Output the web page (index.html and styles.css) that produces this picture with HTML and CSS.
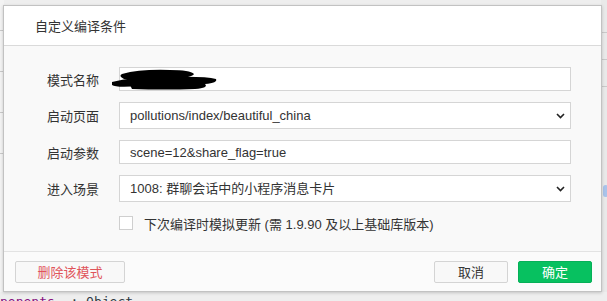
FILE: index.html
```html
<!DOCTYPE html>
<html lang="zh-CN">
<head>
<meta charset="utf-8">
<title>自定义编译条件</title>
<link rel="stylesheet" href="styles.css">
</head>
<body>
<div class="page">
  <div class="editor">
    <div class="gutter">
      <span class="g-line"></span><span class="g-line"></span><span class="g-line"></span><span class="g-line"></span>
    </div>
    <div class="side">
      <span class="s-line"></span><span class="s-line"></span><span class="s-line"></span><span class="s-dot"></span>
    </div>
  </div>
  <div class="console-line"><span class="key">ponents</span>  : Object</div>
</div>

<div class="dialog">
  <div class="dialog-head">自定义编译条件</div>
  <div class="dialog-body">
    <div class="form">
      <label class="label">模式名称</label>
      <div class="field">
        <input class="input" type="text" value="">
        <svg class="redact" width="110" height="24" viewBox="0 0 110 24">
          <path d="M12 6 Q30 1 60 2 Q80 2 84 6 Q82 10 60 11 Q35 12 14 11 Q8 8 12 6 Z" fill="#000"/>
          <path d="M2 14 Q25 8 60 9 Q95 8 106 11 Q108 15 95 16 Q60 17 30 18 Q6 20 2 17 Z" fill="#000"/>
          <path d="M20 17 Q55 14 95 16 Q99 20 85 21 Q55 22 22 21 Z" fill="#000"/>
        </svg>
      </div>

      <label class="label">启动页面</label>
      <div class="field select-wrap">
        <div class="select">pollutions/index/beautiful_china</div>
        <svg class="chev" width="9" height="6" viewBox="0 0 9 6"><path d="M1 1 L4.5 4.5 L8 1" fill="none" stroke="#222" stroke-width="1.6"/></svg>
      </div>

      <label class="label">启动参数</label>
      <div class="field">
        <input class="input" type="text" value="scene=12&amp;share_flag=true">
      </div>

      <label class="label">进入场景</label>
      <div class="field select-wrap">
        <div class="select">1008: 群聊会话中的小程序消息卡片</div>
        <svg class="chev" width="9" height="6" viewBox="0 0 9 6"><path d="M1 1 L4.5 4.5 L8 1" fill="none" stroke="#222" stroke-width="1.6"/></svg>
      </div>

      <div class="check-row">
        <span class="checkbox"></span>
        <span class="check-text">下次编译时模拟更新 (需 1.9.90 及以上基础库版本)</span>
      </div>
    </div>
  </div>
  <div class="dialog-foot">
    <button class="btn btn-danger">删除该模式</button>
    <div class="spacer"></div>
    <button class="btn">取消</button>
    <button class="btn btn-primary">确定</button>
  </div>
</div>
</body>
</html>
```

FILE: styles.css
```css
* { box-sizing: border-box; }
html, body { margin: 0; padding: 0; }
body {
  width: 607px;
  height: 301px;
  overflow: hidden;
  background: #eeeeee;
  font-family: "Noto Sans CJK SC", "Liberation Sans", sans-serif;
  position: relative;
}
.page {
  height: 301px;
  display: flex;
  flex-direction: column;
}
.editor {
  flex: 1;
  display: flex;
  justify-content: space-between;
}
.gutter {
  width: 4px;
  background: #f3f3f3;
  display: flex;
  flex-direction: column;
  padding-top: 30px;
  gap: 40px;
}
.g-line { height: 1px; background: #c9c9c9; }
.side {
  width: 6px;
  background: #e9e9e9;
  display: flex;
  flex-direction: column;
  padding-top: 32px;
  gap: 26px;
}
.s-line { height: 1px; background: #c9c9c9; }
.s-dot { width: 5px; height: 12px; margin-top: 72px; margin-left: 2px; background: #a9c3ea; border-radius: 3px; }
.console-line {
  height: 10px;
  font-family: "DejaVu Sans Mono", monospace;
  font-size: 13px;
  line-height: 22px;
  color: #303942;
  white-space: pre;
  overflow: hidden;
  margin-top: -1px;
}
.key { color: #881280; }

.dialog {
  position: absolute;
  left: 3px;
  top: 5px;
  width: 599px;
  height: 287px;
  border: 1px solid #c2c2c2;
  background: #fff;
  box-shadow: 0 1px 3px rgba(0,0,0,0.18);
  display: flex;
  flex-direction: column;
}
.dialog-head {
  height: 40px;
  line-height: 39px;
  padding-left: 31px;
  border-bottom: 1px solid #dadada;
  font-size: 13px;
  color: #333;
  background: #fff;
}
.dialog-body {
  height: 206px;
  background: #f9f9f9;
  border-bottom: 1px solid #e3e3e3;
  padding: 21px 30px 0 43px;
}
.form {
  display: grid;
  grid-template-columns: 52px 1fr;
  column-gap: 20px;
  row-gap: 11px;
  align-items: center;
}
.label {
  font-size: 13px;
  color: #333;
  white-space: nowrap;
}
.field { position: relative; }
.input, .select {
  display: block;
  width: 100%;
  height: 24px;
  border: 1px solid #d5d5d5;
  background: #fff;
  padding: 0 10px;
  font-family: "Liberation Sans", "Noto Sans CJK SC", sans-serif;
  font-size: 13px;
  color: #333;
  outline: none;
  margin: 0;
}
.select {
  height: 27px;
  line-height: 25px;
}
.chev {
  position: absolute;
  right: 6px;
  top: 11px;
}
.redact {
  position: absolute;
  left: -9px;
  top: 1px;
}
.check-row {
  grid-column: 2;
  display: flex;
  align-items: center;
  gap: 11px;
  height: 18px;
  margin-top: 1px;
}
.checkbox {
  width: 14px;
  height: 14px;
  border: 1px solid #cfcfcf;
  background: #fff;
  flex: none;
}
.check-text {
  font-family: "Liberation Sans", "Noto Sans CJK SC", sans-serif;
  font-size: 13px;
  color: #333;
  white-space: nowrap;
}
.dialog-foot {
  flex: 1;
  background: #fbfbfb;
  display: flex;
  align-items: flex-start;
  padding: 9px 9px 0 11px;
  gap: 10px;
}
.spacer { flex: 1; }
.btn {
  height: 22px;
  width: 74px;
  border: 1px solid #d4d4d4;
  border-radius: 2px;
  background: #f8f8f8;
  font-family: "Noto Sans CJK SC", sans-serif;
  font-size: 13px;
  color: #353535;
  padding: 0;
  line-height: 20px;
}
.btn-danger {
  width: 110px;
  color: #e0545a;
}
.btn-primary {
  background: #07c160;
  border-color: #06b058;
  color: #fff;
}
```
